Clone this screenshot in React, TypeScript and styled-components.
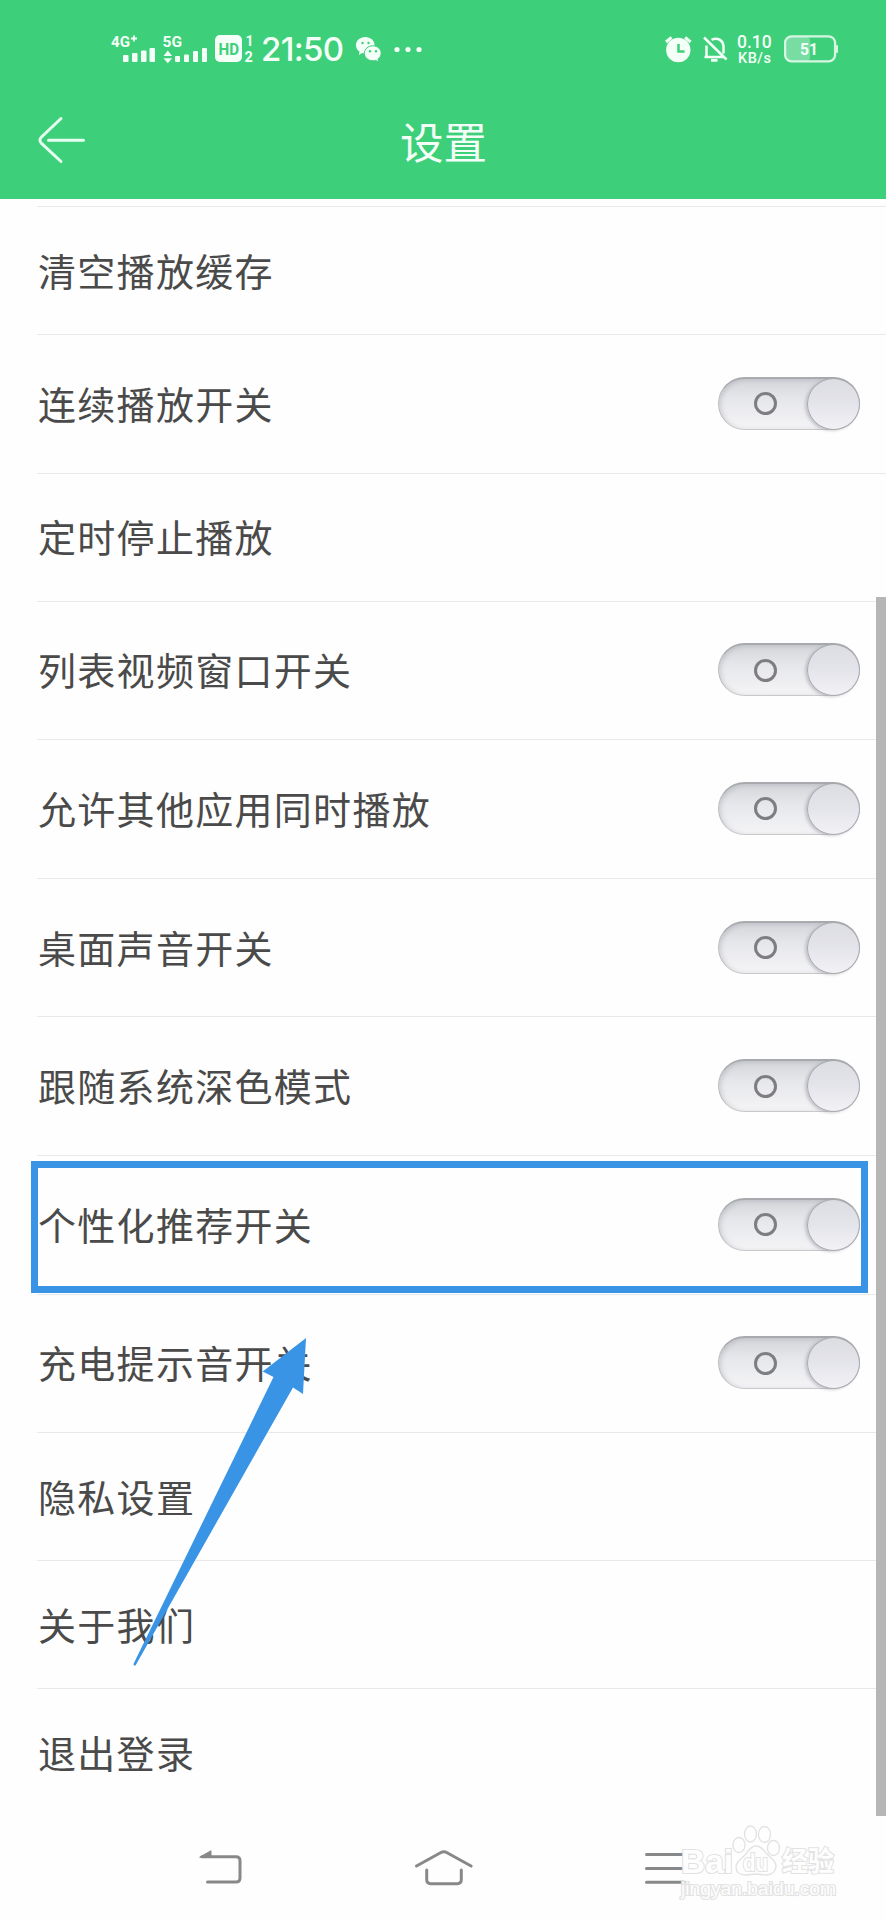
import React from 'react';
import styled, { createGlobalStyle } from 'styled-components';

const GlobalStyle = createGlobalStyle`
  html, body { margin: 0; padding: 0; background: #fefefe; }
  * { box-sizing: border-box; }
  svg { display: block; flex: none; }
`;

const Screen = styled.div`
  position: relative;
  display: flex;
  flex-direction: column;
  width: 886px;
  height: 1920px;
  overflow: hidden;
  background: #fefefe;
  font-family: 'Noto Sans CJK SC', sans-serif;
`;

const Header = styled.header`
  flex: none;
  height: 199px;
  background: #3ecf7a;
  color: #f4fff8;
`;

const StatusBar = styled.div`
  display: flex;
  align-items: center;
  justify-content: space-between;
  height: 98px;
  padding: 0 48px 0 111px;
`;

const StatusGroup = styled.div`
  display: flex;
  align-items: center;
`;

const Clock = styled.span`
  width: 83px;
  margin: 0 11px 0 7px;
  font: 500 33px/40px Inter, sans-serif;
  letter-spacing: -0.7px;
  white-space: nowrap;
`;

const Speed = styled.div`
  display: flex;
  flex-direction: column;
  gap: 1px;
  width: 38px;
  margin: 2px 9px 0 9px;
  font-family: Roboto, sans-serif;
  font-weight: 500;
  white-space: nowrap;
`;

const SpeedValue = styled.span`
  font-size: 17.5px;
  line-height: 16px;
`;

const SpeedUnit = styled.span`
  padding-left: 1px;
  font-size: 14.5px;
  letter-spacing: 0.5px;
  line-height: 15px;
`;

const TitleBar = styled.div`
  display: grid;
  grid-template-columns: 120px 1fr 120px;
  align-items: center;
  height: 88px;
`;

const BackButton = styled.button`
  display: flex;
  padding: 0 0 4px 37px;
  border: 0;
  background: none;
`;

const Title = styled.h1`
  margin: 0 0 2px 1px;
  text-align: center;
  font-size: 43.5px;
  font-weight: 400;
  line-height: 60px;
`;

const List = styled.main`
  flex: none;
  height: 1617px;
  padding: 7px 0 0 37px;
`;

const Row = styled.div<{ $tall: boolean }>`
  display: flex;
  align-items: center;
  justify-content: space-between;
  height: ${(p) => (p.$tall ? 138.6 : 128)}px;
  padding-right: 26px;
  border-top: 1px solid #e9e9e9;
`;

const Label = styled.span`
  margin-bottom: 2px;
  padding-left: 1px;
  font-size: 38px;
  letter-spacing: 1.3px;
  line-height: 56px;
  color: #4a4a4a;
  white-space: nowrap;
`;

const Switch = styled.div`
  display: flex;
  align-items: center;
  justify-content: space-between;
  width: 142px;
  height: 53px;
  margin-bottom: 1px;
  padding-left: 35px;
  border: 1px solid #bcbcc0;
  border-top: 2px solid #a9aaad;
  border-bottom-color: #c9c9cc;
  border-radius: 27px;
  background: linear-gradient(#d3d5d9, #e6e7eb 40%, #f4f4f6);
  box-shadow: inset 2px 1px 4px rgba(120, 124, 135, 0.25);
`;

const Ring = styled.span`
  width: 23px;
  height: 23px;
  border: 3.5px solid #7e7e80;
  border-radius: 50%;
`;

const Knob = styled.span`
  width: 53px;
  height: 52px;
  margin: 0 -1px 0 0;
  border: 1.5px solid #a9aab0;
  border-radius: 50%;
  background: linear-gradient(#dcdde1, #e4e4eb 50%, #f2f2f5);
  box-shadow: -2px 1px 3px rgba(120, 122, 135, 0.35);
`;

const NavBar = styled.nav`
  display: flex;
  height: 104px;
  padding: 19px 0 0 190px;
`;

const ScrollThumb = styled.div`
  position: absolute;
  top: 597px;
  right: 0;
  width: 10px;
  height: 1219px;
  background: #b6b6b6;
`;

const Highlight = styled.div`
  position: absolute;
  left: 31px;
  top: 1161px;
  width: 837px;
  height: 132px;
  border: 7px solid #3994e6;
`;

const Pointer = styled.svg`
  position: absolute;
  left: 130px;
  top: 1335px;
`;

const Watermark = styled.svg`
  position: absolute;
  left: 676px;
  top: 1820px;
`;

const rows: { label: string; toggle?: boolean }[] = [
  { label: '清空播放缓存' },
  { label: '连续播放开关', toggle: true },
  { label: '定时停止播放' },
  { label: '列表视频窗口开关', toggle: true },
  { label: '允许其他应用同时播放', toggle: true },
  { label: '桌面声音开关', toggle: true },
  { label: '跟随系统深色模式', toggle: true },
  { label: '个性化推荐开关', toggle: true },
  { label: '充电提示音开关', toggle: true },
  { label: '隐私设置' },
  { label: '关于我们' },
  { label: '退出登录' },
];

const SignalIcons = () => (
  <svg width="143" height="30" viewBox="111 34 143 30" fill="#f4fff8" fontFamily="Roboto, sans-serif" fontWeight="700">
    <text x="111" y="46.5" fontSize="15" textLength="19" lengthAdjust="spacingAndGlyphs">4G</text>
    <path d="M131 38.5h6M134 35.5v6" stroke="#f4fff8" strokeWidth="1.8" />
    <rect x="123" y="55" width="5.5" height="7" rx="1" />
    <rect x="132" y="53" width="5.5" height="9" rx="1" />
    <rect x="141" y="50.5" width="5.5" height="11.5" rx="1" />
    <rect x="149.5" y="48" width="5.5" height="14" rx="1" />
    <text x="162.5" y="46.5" fontSize="15" textLength="19.5" lengthAdjust="spacingAndGlyphs">5G</text>
    <path d="M163.500 56l4.300-5.500 4.300 5.500zM163.500 58.300l4.300 5 4.300-5z" />
    <rect x="175" y="56" width="5" height="6" rx="1" />
    <rect x="184" y="54.5" width="5" height="7.5" rx="1" />
    <rect x="193" y="51" width="5" height="11" rx="1" />
    <rect x="202" y="48" width="5" height="14" rx="1" />
    <rect x="215" y="35" width="27" height="27" rx="5" />
    <text x="218.5" y="55" fontSize="17" fill="#3ecf7a" textLength="20.5" lengthAdjust="spacingAndGlyphs">HD</text>
    <text x="245.5" y="45.5" fontSize="14">1</text>
    <text x="244.5" y="62" fontSize="14.5">2</text>
  </svg>
);

const ChatIcons = () => (
  <svg width="68" height="28" viewBox="354 35 68 28" fill="#f4fff8">
    <path d="M364.300 37c-5.200 0-9.300 3.600-9.300 8.200 0 2.700 1.400 4.900 3.500 6.400l-.6 3.400 3.300-1.900c1 .2 2 .4 3.100.4 5.200 0 9.300-3.700 9.300-8.300s-4.100-8.200-9.300-8.200z" />
    <path d="M371.800 45.800c-4.700 0-8.400 3.300-8.400 7.500s3.700 7.500 8.400 7.500c1 0 1.900-.1 2.800-.4l2.900 1.700-.5-3c1.900-1.400 3.200-3.400 3.200-5.800 0-4.200-3.700-7.500-8.400-7.500z" stroke="#3ecf7a" strokeWidth="1" />
    <g fill="#3ecf7a">
      <circle cx="361.5" cy="43" r="1.2" />
      <circle cx="367.5" cy="43" r="1.2" />
      <circle cx="369" cy="51.3" r="1.2" />
      <circle cx="375" cy="51.3" r="1.2" />
    </g>
    <circle cx="396" cy="49.5" r="2.6" />
    <circle cx="407" cy="49.5" r="2.6" />
    <circle cx="418" cy="49.5" r="2.6" />
  </svg>
);

const AlarmBellIcons = () => (
  <svg width="63" height="28" viewBox="664 36 63 28" fill="none" stroke="#f4fff8" strokeWidth="2.5">
    <circle cx="677.3" cy="51" r="12.2" fill="#f4fff8" stroke="none" />
    <path d="M665 43l5.500-4.700M689.600 43l-5.500-4.700" strokeWidth="3" />
    <path d="M677.500 45v7.500h6" stroke="#3ecf7a" />
    <path d="M705.500 46.500V58h16.500M704.500 58h-1M710.500 40.800c6-3 11.500.7 12 6.200v7.500M703 38.500l22.500 22" />
    <path d="M710 61.300h6.500" strokeWidth="2.8" />
  </svg>
);

const Battery = () => (
  <svg width="54" height="28" viewBox="783 35 54 28">
    <rect x="785" y="37" width="24" height="24" rx="4" fill="#fff" fillOpacity=".3" />
    <rect x="784.1" y="36.3" width="50" height="25" rx="6.5" fill="none" stroke="#d6f6e2" strokeWidth="2.3" />
    <rect x="835" y="45" width="2" height="8" rx="1" fill="#d6f6e2" />
    <text x="799" y="55" fontFamily="Roboto, sans-serif" fontWeight="700" fontSize="17" fill="#f4fff8" textLength="18" lengthAdjust="spacingAndGlyphs">51</text>
  </svg>
);

const NavIcons = () => (
  <svg width="560" height="60" viewBox="190 1835 560 60" fill="none" stroke="#888" strokeWidth="3" strokeLinecap="round" strokeLinejoin="round">
    <path d="M202 1856.700h34q4 0 4 4v17.300q0 4-4 4h-28.500" />
    <path d="M200 1857l11-6.200v6z" fill="#888" strokeWidth="1" />
    <path d="M416.500 1866l24-13.300q3.300-1.800 6.600 0l24 13.300M426.700 1870v9.500q0 4.200 4.200 4.200h26.200q4.200 0 4.200-4.200V1870" />
    <path d="M646.500 1854.500h38M646.500 1868.500h38M646.500 1882.300h38" />
  </svg>
);

export default function App() {
  return (
    <Screen>
      <GlobalStyle />
      <Header>
        <StatusBar>
          <StatusGroup>
            <SignalIcons />
            <Clock>21:50</Clock>
            <ChatIcons />
          </StatusGroup>
          <StatusGroup>
            <AlarmBellIcons />
            <Speed>
              <SpeedValue>0.10</SpeedValue>
              <SpeedUnit>KB/s</SpeedUnit>
            </Speed>
            <Battery />
          </StatusGroup>
        </StatusBar>
        <TitleBar>
          <BackButton aria-label="返回">
            <svg width="50" height="50" viewBox="37 115 50 50" fill="none" stroke="#e6fff0" strokeWidth="3" strokeLinecap="round">
              <path d="M61 118.500L41.500 137q-3.200 3.200 0 6.400L61 161.500M48.500 140.300H83.500" />
            </svg>
          </BackButton>
          <Title>设置</Title>
        </TitleBar>
      </Header>
      <List>
        {rows.map((row) => (
          <Row key={row.label} $tall={!!row.toggle}>
            <Label>{row.label}</Label>
            {row.toggle && (
              <Switch>
                <Ring />
                <Knob />
              </Switch>
            )}
          </Row>
        ))}
      </List>
      <NavBar>
        <NavIcons />
      </NavBar>
      <ScrollThumb />
      <Highlight />
      <Pointer width="180" height="335" viewBox="130 1335 180 335">
        <path d="M306 1338L262.700 1371.500L273.500 1377L133.500 1664Q133.500 1666 135.500 1665.500L293 1387.500L303 1394Z" fill="#3994e6" />
      </Pointer>
      <Watermark width="170" height="82" viewBox="676 1820 170 82" fill="#fefefe" stroke="#e2e2e2" strokeWidth="1.3">
        <g fontFamily="'Liberation Sans', sans-serif" paintOrder="stroke" strokeWidth="2.2">
          <text x="681" y="1873" fontSize="34" fontWeight="700" textLength="52" lengthAdjust="spacingAndGlyphs">Bai</text>
          <text x="782" y="1871" fontSize="27" fontWeight="700" fontFamily="'Noto Sans CJK SC', sans-serif" textLength="52" lengthAdjust="spacingAndGlyphs">经验</text>
          <text x="681" y="1895" fontSize="18" textLength="155" lengthAdjust="spacingAndGlyphs">jingyan.baidu.com</text>
        </g>
        <ellipse cx="739" cy="1845" rx="6" ry="7.5" />
        <ellipse cx="750.5" cy="1834" rx="6" ry="8" />
        <ellipse cx="764.5" cy="1834.5" rx="6" ry="8" />
        <ellipse cx="773.5" cy="1848" rx="6" ry="7.5" />
        <path d="M756 1846c-6 0-8 6-12 10s-8 6-8 11c0 6 5 8 10 8 4 0 6-1 10-1s6 1 10 1c5 0 10-3 10-9 0-5-4-7-8-11s-6-9-12-9z" />
        <text x="743" y="1871" fontFamily="'Liberation Sans', sans-serif" fontSize="24" fontWeight="700" textLength="25" lengthAdjust="spacingAndGlyphs" paintOrder="stroke" strokeWidth="2.2">du</text>
      </Watermark>
    </Screen>
  );
}
